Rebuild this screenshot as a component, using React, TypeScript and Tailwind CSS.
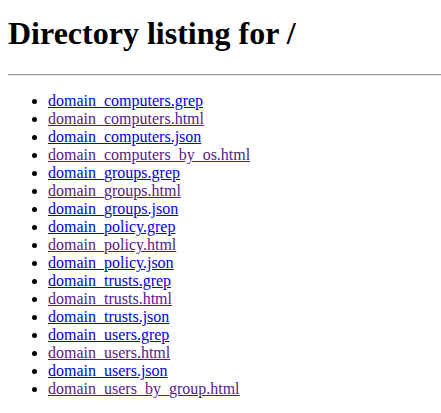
import React from "react";

const files = [
  "domain_computers.grep",
  "domain_computers.html",
  "domain_computers.json",
  "domain_computers_by_os.html",
  "domain_groups.grep",
  "domain_groups.html",
  "domain_groups.json",
  "domain_policy.grep",
  "domain_policy.html",
  "domain_policy.json",
  "domain_trusts.grep",
  "domain_trusts.html",
  "domain_trusts.json",
  "domain_users.grep",
  "domain_users.html",
  "domain_users.json",
  "domain_users_by_group.html",
];

export default function App() {
  return (
    <div
      className="min-h-[413px] bg-white pl-2 pt-[1px] text-black"
      style={{ fontFamily: '"Liberation Serif", "Times New Roman", serif' }}
    >
      <h1 className="mt-[14px] mb-[22px] text-[32px] font-bold leading-[normal]">
        Directory listing for /
      </h1>
      <hr className="mt-2 mb-[7px] h-0 border-0 border-t border-b border-t-[#999999] border-b-[#eeeeee]" />
      <ul className="my-4 list-disc pl-10 text-base leading-[normal]">
        {files.map((f) => (
          <li key={f}>
            <a
              href={"#" + f}
              className={
                "underline " +
                (f.endsWith(".html") ? "text-[#551a8b]" : "text-[#0000ee]")
              }
            >
              {f}
            </a>
          </li>
        ))}
      </ul>
    </div>
  );
}
